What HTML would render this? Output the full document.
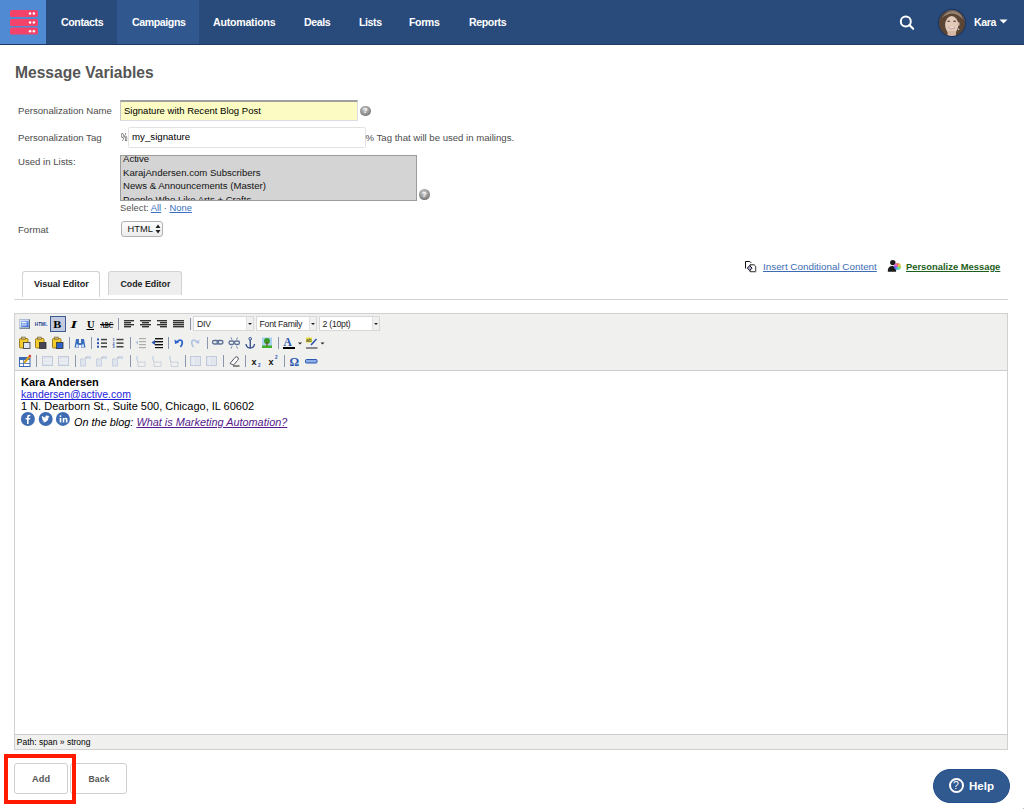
<!DOCTYPE html>
<html><head><meta charset="utf-8">
<style>
*{margin:0;padding:0;box-sizing:border-box}
html,body{width:1024px;height:809px;overflow:hidden;background:#fff;font-family:"Liberation Sans",sans-serif;position:relative}
.a{position:absolute;white-space:nowrap}
#nav{position:absolute;left:0;top:0;width:1024px;height:45px;background:#294b7b;border-bottom:1px solid #1c3a66}
#logo{position:absolute;left:0;top:0;width:46px;height:44px;background:#4f8ad3}
.bar{position:absolute;left:10px;width:28px;height:7px;background:#f4436c;border-radius:1.5px}
.bar i{position:absolute;top:2.5px;width:2.5px;height:2.5px;border-radius:50%;background:#fff}
#act{position:absolute;left:117px;top:0;width:82px;height:44px;background:#30588f}
.nv{position:absolute;top:16px;color:#fff;font-weight:bold;font-size:10.6px;line-height:12px;letter-spacing:-0.4px}
.lbl{position:absolute;left:18px;color:#4c4c4c;font-size:9.6px;line-height:11px}
.help{position:absolute;width:10.5px;height:10.5px;border-radius:50%;background:radial-gradient(circle at 45% 35%,#d0d0d0 0,#8a8a8a 60%,#5a5a5a 100%);}
.help:after{content:"?";position:absolute;left:0;top:0.5px;width:10.5px;text-align:center;color:#fff;font-size:8px;font-weight:bold;line-height:10px}
.sel{height:15px;background:#fff;border:1px solid #d8d8d8;font-size:8.7px;line-height:14px;color:#222;letter-spacing:-0.25px}.sel span{position:absolute;left:3px;top:0}.sel b{position:absolute;right:0;top:0;width:7.5px;height:13px;background:#f0f0f0;border-left:1px solid #e0e0e0}.sel b:after{content:"";position:absolute;left:1.5px;top:5.5px;border:2.2px solid transparent;border-top:2.5px solid #222;border-bottom:none}
</style></head><body>
<div id="nav">
  <div id="logo"><svg width="46" height="44" viewBox="0 0 46 44"><rect x="10" y="10" width="28" height="7" rx="1.6" fill="#f3436b"/><circle cx="30.05" cy="13.6" r="1.25" fill="#fff"/><circle cx="33.85" cy="13.6" r="1.25" fill="#fff"/><rect x="10" y="19" width="28" height="7" rx="1.6" fill="#f3436b"/><circle cx="30.05" cy="22.6" r="1.25" fill="#fff"/><circle cx="33.85" cy="22.6" r="1.25" fill="#fff"/><rect x="10" y="27.6" width="28" height="7" rx="1.6" fill="#f3436b"/><circle cx="30.05" cy="31.200000000000003" r="1.25" fill="#fff"/><circle cx="33.85" cy="31.200000000000003" r="1.25" fill="#fff"/></svg></div>
  <div id="act"></div>
  <div class="nv" style="left:61px">Contacts</div>
  <div class="nv" style="left:132px">Campaigns</div>
  <div class="nv" style="left:213px;letter-spacing:-0.22px">Automations</div>
  <div class="nv" style="left:304px">Deals</div>
  <div class="nv" style="left:359px">Lists</div>
  <div class="nv" style="left:409px">Forms</div>
  <div class="nv" style="left:469px">Reports</div>
  <svg class="a" style="left:898px;top:14px" width="18" height="18" viewBox="0 0 18 18"><circle cx="7.8" cy="7.4" r="5" fill="none" stroke="#fff" stroke-width="2"/><line x1="11.4" y1="11" x2="15.2" y2="14.8" stroke="#fff" stroke-width="2.1" stroke-linecap="round"/></svg>
  <svg class="a" style="left:937px;top:8px" width="30" height="30" viewBox="0 0 30 30">
    <defs><clipPath id="av"><circle cx="15" cy="15" r="13"/></clipPath><filter id="bl" x="-20%" y="-20%" width="140%" height="140%"><feGaussianBlur stdDeviation="0.7"/></filter></defs>
    <circle cx="15" cy="15" r="14.2" fill="#1b3762"/>
    <g clip-path="url(#av)"><g filter="url(#bl)">
      <rect x="0" y="0" width="30" height="30" fill="#8a7c70"/>
      <path d="M2 30 L2 14 Q3 3 15 2.5 Q27 3 28 14 L28 30Z" fill="#5a4436"/>
      <path d="M5 10 Q9 3 16 3 Q24 3.5 26.5 12 Q21 5.5 15 5.5 Q9 6 5 10Z" fill="#b0a090" opacity="0.7"/>
      <path d="M3 18 Q4 26 8 30 L5 30Z" fill="#c08a50"/>
      <ellipse cx="14.7" cy="17" rx="6.6" ry="9" fill="#e2cabb"/>
      <rect x="10.5" y="23" width="8.5" height="8" fill="#d6b8a4"/>
      <ellipse cx="11.7" cy="13.2" rx="1.6" ry="0.8" fill="#6a4a40"/>
      <ellipse cx="17.6" cy="13.2" rx="1.6" ry="0.8" fill="#6a4a40"/>
      <path d="M11.5 19.5 Q14.7 22 18 19.5 Q14.7 21" fill="#fff" stroke="#a06060" stroke-width="0.6"/>
      <ellipse cx="21.5" cy="16" rx="1.2" ry="2" fill="#d2b4a0"/>
      <circle cx="21.7" cy="21.3" r="0.7" fill="#e8e0d0"/>
    </g></g>
  </svg>
  <div class="nv" style="left:974px;top:16px">Kara</div>
  <svg class="a" style="left:999px;top:19px" width="9" height="5" viewBox="0 0 9 5"><path d="M0.5 0.5H8.5L4.5 4.5Z" fill="#fff"/></svg>
</div>

<div class="a" style="left:15px;top:64px;font-size:15.6px;font-weight:bold;color:#555;line-height:18px">Message Variables</div>

<div class="lbl" style="top:105px">Personalization Name</div>
<div class="lbl" style="top:132px">Personalization Tag</div>
<div class="lbl" style="top:156px">Used in Lists:</div>
<div class="lbl" style="top:224px">Format</div>


<div class="a" style="left:120px;top:100px;width:238px;height:21px;background:#fbfbc3;border:1px solid #dcdce4;border-top:2px solid #a0a0a0;border-left-color:#c8c8cc"></div>
<div class="a" style="left:124px;top:105px;font-size:9.55px;line-height:11px;color:#000">Signature with Recent Blog Post</div>
<div class="help" style="left:360px;top:105.5px"></div>

<div class="a" style="left:128px;top:127px;width:237.5px;height:21px;background:#fff;border:1px solid #e3e3e3;border-radius:1.5px"></div>
<div class="a" style="left:121px;top:133px;font-size:10.4px;line-height:10px;color:#444;transform:scaleX(0.7);transform-origin:0 0">%</div>
<div class="a" style="left:132px;top:131px;font-size:9.7px;line-height:11px;color:#000">my_signature</div>
<div class="a" style="left:365.5px;top:132px;font-size:9.6px;line-height:11px;color:#4c4c4c">% Tag that will be used in mailings.</div>
<div class="a" style="left:120px;top:155px;width:297px;height:46px;background:#d4d4d4;border:1px solid #9c9c9c;overflow:hidden">
  <div style="position:absolute;left:2px;top:-4.2px;font-size:9.6px;line-height:13.7px;color:#111">Active<br>KarajAndersen.com Subscribers<br>News &amp; Announcements (Master)<br>People Who Like Arts + Crafts</div>
</div>
<div class="help" style="left:419px;top:189px"></div>
<div class="a" style="left:120px;top:202px;font-size:9.4px;line-height:11px;color:#555">Select: <span style="color:#3a6fc2;text-decoration:underline">All</span> · <span style="color:#3a6fc2;text-decoration:underline">None</span></div>
<div class="a" style="left:121px;top:221px;width:42px;height:16px;border:1px solid #b0b0b0;border-radius:3px;background:linear-gradient(#fdfdfd,#ececec)"></div>
<div class="a" style="left:127.5px;top:223.5px;font-size:9.3px;line-height:11px;color:#111">HTML</div>
<svg class="a" style="left:155px;top:224px" width="6" height="10" viewBox="0 0 6 10"><path d="M0.5 4H5.5L3 0.5Z M0.5 6H5.5L3 9.5Z" fill="#222"/></svg>

<!-- links row -->
<svg class="a" style="left:744px;top:260px" width="14" height="13" viewBox="0 0 14 13"><path d="M1.5 8.5 V1.5 H5.8 L7.2 2.9" fill="#fff" stroke="#111" stroke-width="1"/><path d="M6 4.8 H10.2 L11.6 6.2 V11.6 H6 Z" fill="#fff" stroke="#222" stroke-width="1"/><path d="M11.9 6.5 V12 H6.5" fill="none" stroke="#999" stroke-width="0.7"/><path d="M5.7 5.6 L8.1 8.1 L5.7 10.6 L3.3 8.1Z" fill="#b4acdc" stroke="#111" stroke-width="1"/></svg>
<div class="a" style="left:763px;top:261.3px;font-size:9.85px;line-height:11px;color:#3d6cb5;text-decoration:underline">Insert Conditional Content</div>
<svg class="a" style="left:886px;top:259px" width="16" height="14" viewBox="0 0 16 14"><circle cx="6.8" cy="3.6" r="2.7" fill="#1a1a1a"/><path d="M1.8 12.8 Q1.4 7 6.6 7 Q9.6 7 10.4 9.5 L10 12.8Z" fill="#1a1a1a"/></svg>
<div class="a" style="left:893.6px;top:262.6px;width:7.6px;height:7.6px;border-radius:50%;background:conic-gradient(#f07070,#f0d040,#80e060,#50d0e0,#6060f0,#e060e0,#f07070)"></div>
<div class="a" style="left:906px;top:261px;font-size:9.4px;line-height:11px;font-weight:bold;color:#1e5e1c;text-decoration:underline">Personalize Message</div>

<!-- tabs -->
<div class="a" style="left:22px;top:271px;width:78px;height:26px;background:#fff;border:1px solid #d2d2d2;border-bottom:none;border-radius:3px 3px 0 0"></div>
<div class="a" style="left:108px;top:271px;width:74px;height:24px;background:#eeeeee;border:1px solid #d2d2d2;border-bottom:none;border-radius:3px 3px 0 0"></div>
<div class="a" style="left:14px;top:299px;width:994px;height:1px;background:#d2d2d2"></div>
<div class="a" style="left:34px;top:279px;font-size:9px;line-height:11px;font-weight:bold;color:#222">Visual Editor</div>
<div class="a" style="left:120.5px;top:279px;font-size:8.8px;line-height:11px;font-weight:bold;color:#222">Code Editor</div>

<!-- editor -->
<div class="a" style="left:14px;top:313px;width:994px;height:437px;border:1px solid #d0d0d0;background:#fff"></div>
<div class="a" style="left:15px;top:314px;width:992px;height:57px;background:#f0f0ee;border-bottom:1px solid #cccccc"></div>
<div class="a" style="left:15px;top:734px;width:992px;height:15px;background:#f0f0ee;border-top:1px solid #cccccc"></div>
<div class="a" style="left:16.8px;top:737px;font-size:8.5px;line-height:11px;color:#000">Path: span » strong</div>

<!--TB--><svg class="a" style="left:0;top:310px" width="400" height="62" viewBox="0 310 400 62"><defs><linearGradient id="vg" x1="0" y1="0" x2="1" y2="1"><stop offset="0" stop-color="#a8c4f8"/><stop offset="1" stop-color="#2f62d8"/></linearGradient></defs><rect x="19.2" y="319" width="10.6" height="9.6" fill="#dde6f2"/><rect x="19.2" y="319" width="10.6" height="0.9" fill="#a8b8d0"/><rect x="19.2" y="319" width="0.9" height="9.6" fill="#b8c6da"/><rect x="28.9" y="319.5" width="0.9" height="9.1" fill="#3e4c60"/><rect x="19.7" y="327.7" width="10.1" height="0.9" fill="#3e4c60"/><rect x="21" y="320.8" width="7.6" height="6.2" fill="url(#vg)"/><rect x="22" y="322" width="4.5" height="1.2" fill="#f0f4ff"/><rect x="22" y="324.4" width="5" height="1" fill="#e0e8ff"/><text x="34.8" y="326.2" font-family="Liberation Sans" font-weight="bold" font-size="6" fill="#1a3a88" textLength="13" lengthAdjust="spacingAndGlyphs">HTM<tspan fill="#4a78d8">L</tspan></text><rect x="50.5" y="316.5" width="15" height="15" fill="#c2cbe0" stroke="#3d5a94" stroke-width="1"/><text x="53.2" y="328" font-family="Liberation Serif" font-weight="bold" font-size="11" fill="#000" textLength="8" lengthAdjust="spacingAndGlyphs">B</text><text x="70.5" y="328" font-family="Liberation Serif" font-weight="bold" font-style="italic" font-size="11" fill="#000" textLength="6.5" lengthAdjust="spacingAndGlyphs">I</text><text x="87" y="327.5" font-family="Liberation Serif" font-weight="bold" font-size="10.5" fill="#000">U</text><rect x="86.5" y="329" width="7.5" height="1" fill="#000"/><text x="100.5" y="327.5" font-family="Liberation Serif" font-weight="bold" font-size="8.5" fill="#000" textLength="12.5" lengthAdjust="spacingAndGlyphs">ABC</text><rect x="100" y="324" width="13.5" height="1.1" fill="#000"/><rect x="118" y="318" width="1" height="12" fill="#8a96ac"/><rect x="124" y="320" width="10" height="1.4" fill="#333"/><rect x="124" y="322" width="7" height="1.4" fill="#333"/><rect x="124" y="324" width="10" height="1.4" fill="#333"/><rect x="124" y="326" width="7" height="1.4" fill="#333"/><rect x="140" y="320" width="11" height="1.4" fill="#333"/><rect x="142" y="322" width="7" height="1.4" fill="#333"/><rect x="140" y="324" width="11" height="1.4" fill="#333"/><rect x="142" y="326" width="7" height="1.4" fill="#333"/><rect x="157" y="320" width="10" height="1.4" fill="#333"/><rect x="160" y="322" width="7" height="1.4" fill="#333"/><rect x="157" y="324" width="10" height="1.4" fill="#333"/><rect x="160" y="326" width="7" height="1.4" fill="#333"/><rect x="173" y="320" width="11" height="1.4" fill="#333"/><rect x="173" y="322" width="11" height="1.4" fill="#333"/><rect x="173" y="324" width="11" height="1.4" fill="#333"/><rect x="173" y="326" width="11" height="1.4" fill="#333"/><rect x="190" y="318" width="1" height="12" fill="#8a96ac"/><rect x="19.5" y="338.5" width="8.5" height="9.5" rx="1" fill="#f2cc2a" stroke="#8a6a10" stroke-width="0.8"/><rect x="21.5" y="337" width="4" height="2.5" fill="#c8b070" stroke="#6a5a30" stroke-width="0.5"/><rect x="23.5" y="342.5" width="6.5" height="6" fill="#dce6f4" stroke="#333" stroke-width="0.8"/><rect x="35.5" y="338.5" width="8.5" height="9.5" rx="1" fill="#f2cc2a" stroke="#8a6a10" stroke-width="0.8"/><rect x="37.5" y="337" width="4" height="2.5" fill="#c8b070" stroke="#6a5a30" stroke-width="0.5"/><rect x="39.5" y="342.5" width="6.5" height="6" fill="#445" stroke="#333" stroke-width="0.8"/><rect x="52.5" y="338.5" width="8.5" height="9.5" rx="1" fill="#f2cc2a" stroke="#8a6a10" stroke-width="0.8"/><rect x="54.5" y="337" width="4" height="2.5" fill="#c8b070" stroke="#6a5a30" stroke-width="0.5"/><rect x="56.5" y="342.5" width="6.5" height="6" fill="#2f62c8" stroke="#333" stroke-width="0.8"/><rect x="69" y="337" width="1" height="12" fill="#8a96ac"/><path d="M74.5 347.5 L76 339 L79 339 L79 343 L81 343 L81 339 L84 339 L85.5 347.5 L81 347.5 L81 345 L79 345 L79 347.5Z" fill="#3a6fc0"/><rect x="76" y="344.5" width="2.5" height="2.5" fill="#cfe0f8"/><rect x="81.5" y="344.5" width="2.5" height="2.5" fill="#cfe0f8"/><rect x="91" y="337" width="1" height="12" fill="#8a96ac"/><rect x="97" y="338.5" width="2" height="2" fill="#2a55b0"/><rect x="101" y="338.8" width="6" height="1.5" fill="#444"/><text x="112.5" y="341.0" font-family="Liberation Sans" font-size="3.8" font-weight="bold" fill="#2a55b0">1</text><rect x="116.5" y="338.8" width="7" height="1.5" fill="#444"/><rect x="97" y="342.1" width="2" height="2" fill="#2a55b0"/><rect x="101" y="342.40000000000003" width="6" height="1.5" fill="#444"/><text x="112.5" y="344.6" font-family="Liberation Sans" font-size="3.8" font-weight="bold" fill="#2a55b0">2</text><rect x="116.5" y="342.40000000000003" width="7" height="1.5" fill="#444"/><rect x="97" y="345.7" width="2" height="2" fill="#2a55b0"/><rect x="101" y="346.0" width="6" height="1.5" fill="#444"/><text x="112.5" y="348.2" font-family="Liberation Sans" font-size="3.8" font-weight="bold" fill="#2a55b0">3</text><rect x="116.5" y="346.0" width="7" height="1.5" fill="#444"/><rect x="130" y="337" width="1" height="12" fill="#8a96ac"/><g opacity="0.35"><rect x="139" y="338" width="7" height="1.2" fill="#333"/><rect x="139" y="341" width="7" height="1.2" fill="#333"/><rect x="139" y="344" width="7" height="1.2" fill="#333"/><rect x="139" y="347" width="7" height="1.2" fill="#333"/><path d="M135.5 342.5 L138 340.5 L138 344.5Z" fill="#3a6fc0"/></g><rect x="155" y="338" width="8" height="1.4" fill="#111"/><rect x="155" y="341" width="8" height="1.4" fill="#111"/><rect x="155" y="344" width="8" height="1.4" fill="#111"/><rect x="155" y="347" width="8" height="1.2" fill="#111"/><path d="M151.5 342.5 L155 340 L155 345Z" fill="#2a55b0"/><rect x="168" y="337" width="1" height="12" fill="#8a96ac"/><path d="M174.5 339.5 L175 344 L179 342.5Z" fill="#2a62c8"/><path d="M176.5 342.5 Q179 339 181.5 340.5 Q183.5 343 180.5 347" fill="none" stroke="#2a62c8" stroke-width="1.7"/><g opacity="0.3"><path d="M199.5 339.5 L199 344 L195 342.5Z" fill="#2a62c8"/><path d="M197.5 342.5 Q195 339 192.5 340.5 Q190.5 343 193.5 347" fill="none" stroke="#2a62c8" stroke-width="1.7"/></g><rect x="207" y="337" width="1" height="12" fill="#8a96ac"/><rect x="212.5" y="340.5" width="6" height="3.5" rx="1.75" fill="none" stroke="#5a6f98" stroke-width="1.3"/><rect x="217" y="340.5" width="6" height="3.5" rx="1.75" fill="none" stroke="#5a6f98" stroke-width="1.3"/><rect x="229" y="341" width="5" height="3.5" rx="1.75" fill="none" stroke="#5a6f98" stroke-width="1.3"/><rect x="234.5" y="341" width="5" height="3.5" rx="1.75" fill="none" stroke="#5a6f98" stroke-width="1.3"/><path d="M231 337.5 L232 339.5 M237.5 337.5 L236.5 339.5 M231 348.5 L232 346.5 M237.5 348.5 L236.5 346.5" stroke="#5a6f98" stroke-width="0.9"/><circle cx="250.2" cy="338.8" r="1.3" fill="none" stroke="#2a4a8a" stroke-width="1"/><rect x="249.6" y="340" width="1.3" height="8" fill="#2a4a8a"/><path d="M246 344 Q246.5 348 250.2 348 Q254 348 254.5 344" fill="none" stroke="#2a4a8a" stroke-width="1.3"/><rect x="262" y="337.5" width="10" height="10" fill="#a8d2f0"/><rect x="262" y="345.5" width="10" height="2.5" fill="#3fae2a"/><circle cx="267" cy="341" r="3" fill="#3a9a28"/><rect x="266.4" y="342" width="1.2" height="4" fill="#7a4a1a"/><rect x="278" y="337" width="1" height="12" fill="#8a96ac"/><text x="283.5" y="346" font-family="Liberation Serif" font-weight="bold" font-size="11.5" fill="#2a55b0">A</text><rect x="283" y="347" width="12" height="2" fill="#000"/><path d="M298 342.5 L302 342.5 L300 344.5Z" fill="#222"/><rect x="306" y="337.5" width="6" height="5" fill="#e8e040"/><text x="306" y="342" font-family="Liberation Sans" font-size="5" fill="#333">ab</text><path d="M311 345 L316.5 339" stroke="#2a55b0" stroke-width="1.6"/><rect x="306" y="347" width="11.5" height="2" fill="#888"/><path d="M320.5 342.5 L324.5 342.5 L322.5 344.5Z" fill="#222"/><rect x="19.5" y="357.5" width="10.5" height="9" fill="#fff" stroke="#3d6ab5" stroke-width="1"/><rect x="19.5" y="357.5" width="10.5" height="2.5" fill="#3d6ab5"/><rect x="23" y="360" width="0.8" height="6.5" fill="#3d6ab5"/><rect x="19.5" y="363" width="10.5" height="0.8" fill="#3d6ab5"/><path d="M24 363 L30 356" stroke="#d8a020" stroke-width="2.2"/><path d="M29.3 356.7 L30.7 355.3" stroke="#e03030" stroke-width="2.2"/><rect x="36" y="355" width="1" height="12" fill="#8a96ac"/><g opacity="0.45"><rect x="42.5" y="356.5" width="10" height="9" fill="#d0dcf0" stroke="#8aa0c8" stroke-width="1"/><rect x="43" y="359.5" width="9" height="0.8" fill="#fff"/><rect x="43" y="362.5" width="9" height="0.8" fill="#fff"/></g><g opacity="0.45"><rect x="58.5" y="356.5" width="10" height="9" fill="#d0dcf0" stroke="#8aa0c8" stroke-width="1"/><rect x="59" y="359.5" width="9" height="0.8" fill="#fff"/><rect x="59" y="362.5" width="9" height="0.8" fill="#fff"/></g><rect x="75" y="355" width="1" height="12" fill="#8a96ac"/><g opacity="0.45"><rect x="80.5" y="359" width="5" height="7" fill="#d0dcf0" stroke="#8aa0c8" stroke-width="0.8"/><rect x="86" y="356" width="5" height="3" fill="#a8c0e8"/><path d="M85 357.5 L87 357.5" stroke="#555" stroke-width="0.7"/></g><g opacity="0.45"><rect x="96.5" y="359" width="5" height="7" fill="#d0dcf0" stroke="#8aa0c8" stroke-width="0.8"/><rect x="102" y="356" width="5" height="3" fill="#a8c0e8"/><path d="M101 357.5 L103 357.5" stroke="#555" stroke-width="0.7"/></g><g opacity="0.45"><rect x="112.5" y="359" width="5" height="7" fill="#d0dcf0" stroke="#8aa0c8" stroke-width="0.8"/><rect x="118" y="356" width="5" height="3" fill="#a8c0e8"/><path d="M117 357.5 L119 357.5" stroke="#555" stroke-width="0.7"/></g><rect x="130" y="355" width="1" height="12" fill="#8a96ac"/><g opacity="0.45"><rect x="136" y="356" width="2" height="4" fill="#a8c0e8"/><rect x="137" y="360" width="0.6" height="2" fill="#555"/><rect x="138" y="362" width="7" height="4.5" fill="none" stroke="#8aa0c8" stroke-width="0.8"/></g><g opacity="0.45"><rect x="152" y="356" width="2" height="4" fill="#a8c0e8"/><rect x="153" y="360" width="0.6" height="2" fill="#555"/><rect x="154" y="362" width="7" height="4.5" fill="none" stroke="#8aa0c8" stroke-width="0.8"/></g><g opacity="0.45"><rect x="169" y="356" width="2" height="4" fill="#a8c0e8"/><rect x="170" y="360" width="0.6" height="2" fill="#555"/><rect x="171" y="362" width="7" height="4.5" fill="none" stroke="#8aa0c8" stroke-width="0.8"/></g><rect x="185" y="355" width="1" height="12" fill="#8a96ac"/><g opacity="0.45"><rect x="190.5" y="356.5" width="10" height="9" fill="#d0dcf0" stroke="#8aa0c8" stroke-width="1"/><rect x="193" y="357" width="0.8" height="8" fill="#fff"/></g><g opacity="0.45"><rect x="206.5" y="356.5" width="10" height="9" fill="#d0dcf0" stroke="#8aa0c8" stroke-width="1"/><rect x="209" y="357" width="0.8" height="8" fill="#fff"/></g><rect x="223" y="355" width="1" height="12" fill="#8a96ac"/><path d="M230 363.5 L235 357.5 Q236.5 356 238 357.5 Q239 359 237.5 360.5 L233.5 365 Z" fill="#fff" stroke="#445" stroke-width="0.9"/><rect x="233" y="365.5" width="6.5" height="1" fill="#222"/><rect x="245" y="355" width="1" height="12" fill="#8a96ac"/><text x="251.5" y="364.5" font-family="Liberation Sans" font-weight="bold" font-size="9" fill="#111">x</text><text x="258" y="366.5" font-family="Liberation Sans" font-weight="bold" font-size="4.5" fill="#2a55b0">2</text><text x="268.5" y="364.5" font-family="Liberation Sans" font-weight="bold" font-size="9" fill="#111">x</text><text x="275" y="359" font-family="Liberation Sans" font-weight="bold" font-size="4.5" fill="#2a55b0">2</text><rect x="284" y="355" width="1" height="12" fill="#8a96ac"/><text x="289.5" y="365.5" font-family="Liberation Serif" font-weight="bold" font-size="12" fill="#2a55b0">Ω</text><rect x="305.5" y="359.5" width="11.5" height="3.5" rx="1" fill="#8ab0e8" stroke="#2a55b0" stroke-width="1"/></svg>
<div class="a sel" style="left:193px;top:316px;width:61px"><span>DIV</span><b></b></div>
<div class="a sel" style="left:255.5px;top:316px;width:61.5px"><span>Font Family</span><b></b></div>
<div class="a sel" style="left:318.5px;top:316px;width:61.5px"><span>2 (10pt)</span><b></b></div>
<!--/TB-->
<div class="a" style="left:21px;top:376px;font-size:11px;line-height:12px;color:#000;font-weight:bold">Kara Andersen</div>
<div class="a" style="left:21px;top:388px;font-size:10.5px;line-height:12px;color:#2222dd;text-decoration:underline">kandersen@active.com</div>
<div class="a" style="left:21px;top:400px;font-size:11px;line-height:12px;color:#000">1 N. Dearborn St., Suite 500, Chicago, IL 60602</div>
<svg class="a" style="left:20px;top:410px" width="52" height="17" viewBox="20 410 52 17">
<circle cx="27.9" cy="419" r="7" fill="#3e6db4"/>
<path d="M28.6 424 L28.6 419.6 L30.1 419.6 L30.3 418 L28.6 418 L28.6 417.1 Q28.6 416.3 29.4 416.3 L30.3 416.3 L30.3 414.9 Q29.8 414.8 29 414.8 Q27 414.8 27 416.9 L27 418 L25.6 418 L25.6 419.6 L27 419.6 L27 424Z" fill="#fff"/>
<circle cx="45.7" cy="419" r="7" fill="#3e6db4"/>
<path d="M41.2 421.6 Q43.6 423 46 421.8 Q48.6 420.4 48.6 417.2 L49.5 416.4 L48.5 416.6 L49.2 415.7 L48.1 416 Q47.3 415.2 46.2 415.6 Q45.2 416.1 45.4 417.4 Q43.3 417.3 41.9 415.7 Q41.3 417.2 42.6 418.4 L41.9 418.2 Q42 419.6 43.3 420 L42.6 420 Q43.1 421.1 44.4 421.2 Q43 422 41.2 421.6Z" fill="#fff"/>
<g transform="translate(0.3,0.9)"><circle cx="62.6" cy="418" r="7" fill="#3e6db4"/>
<rect x="59.4" y="417" width="1.6" height="4.6" fill="#fff"/><circle cx="60.2" cy="415.2" r="0.95" fill="#fff"/>
<path d="M62.4 421.6 L62.4 417 L63.9 417 L63.9 417.7 Q64.5 416.8 65.6 416.8 Q67.2 416.8 67.2 418.8 L67.2 421.6 L65.6 421.6 L65.6 419.1 Q65.6 418.1 64.9 418.1 Q64 418.1 64 419.2 L64 421.6Z" fill="#fff"/>
</g></svg>
<div class="a" style="left:74px;top:416px;font-size:10.9px;line-height:12px;color:#000;font-style:italic">On the blog: <span style="color:#551a8b;text-decoration:underline">What is Marketing Automation?</span></div>

<!-- buttons -->
<div class="a" style="left:14px;top:762.5px;width:54px;height:31.5px;border:1px solid #cfcfcf;border-radius:3px;background:#fff"></div>
<div class="a" style="left:70px;top:762.5px;width:57px;height:31.5px;border:1px solid #cfcfcf;border-radius:3px;background:#fff"></div>
<div class="a" style="left:32px;top:774px;font-size:9.2px;line-height:10px;color:#555;font-weight:bold;letter-spacing:0.1px">Add</div>
<div class="a" style="left:88.5px;top:774px;font-size:8.6px;line-height:10px;color:#555;font-weight:bold;letter-spacing:0.15px">Back</div>
<div class="a" style="left:4px;top:754px;width:72px;height:50px;border:4px solid #ff1a00"></div>

<div class="a" style="left:933px;top:769px;width:77px;height:34px;border-radius:17px;background:#30598f;border:1px solid #24508e"></div>
<div class="a" style="left:1023px;top:808px;width:1px;height:1px;background:#bbb"></div>
<div class="a" style="left:948.5px;top:778px;width:15px;height:15px;border-radius:50%;border:2px solid #fff"></div>
<div class="a" style="left:948.5px;top:778.5px;width:15px;text-align:center;font-size:10.5px;line-height:13px;color:#fff">?</div>
<div class="a" style="left:969px;top:780px;font-size:11.5px;line-height:12px;font-weight:bold;color:#fff">Help</div>
</body></html>
